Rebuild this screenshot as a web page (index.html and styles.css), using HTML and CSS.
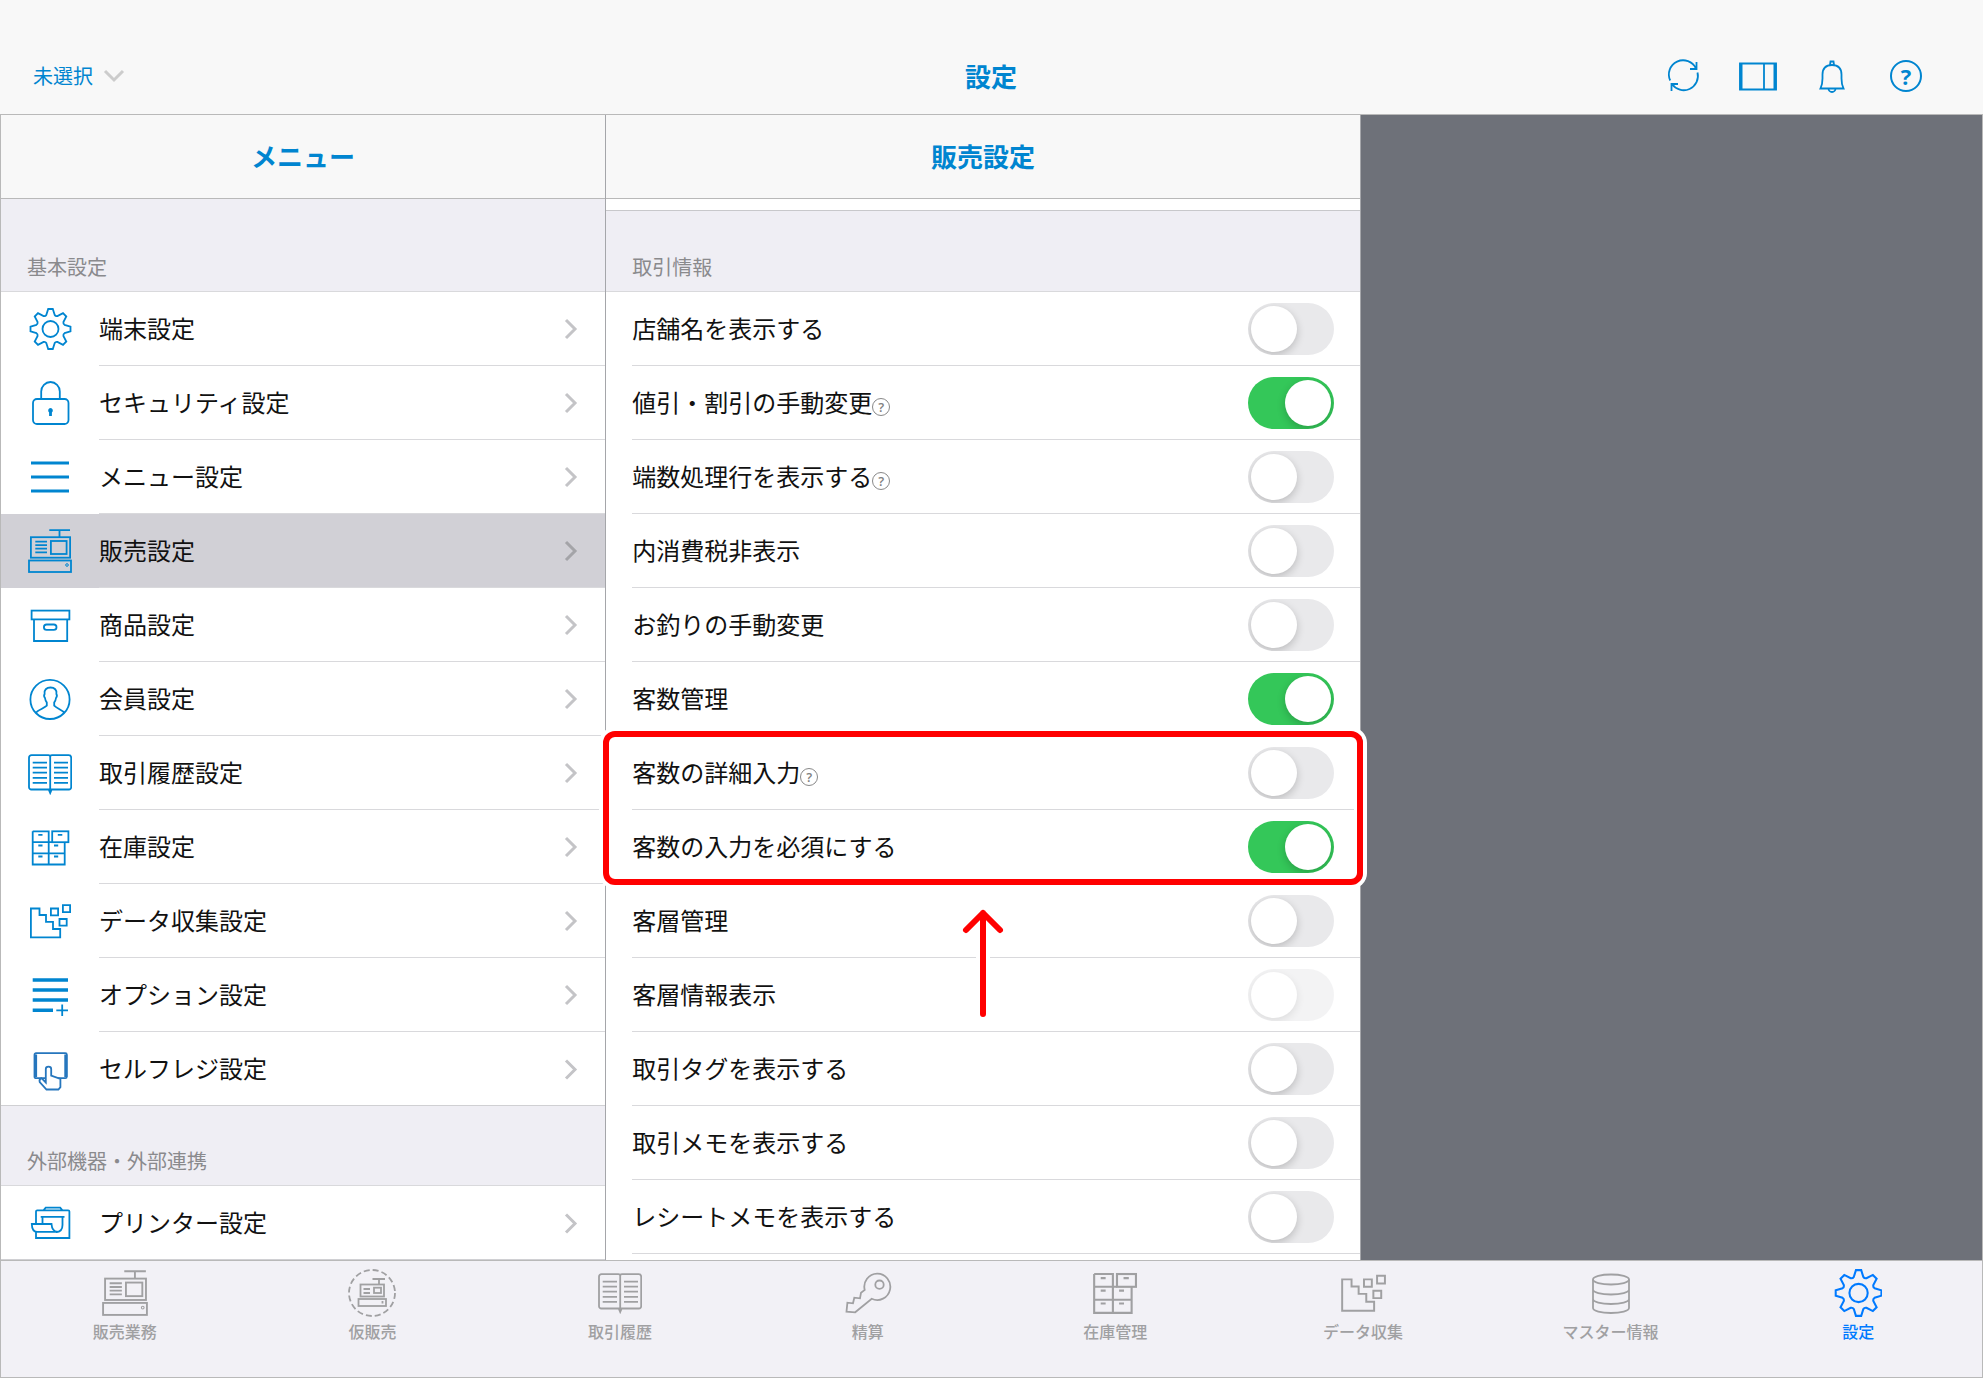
FILE: index.html
```html
<!DOCTYPE html>
<html lang="ja">
<head>
  <meta charset="utf-8">
  <title>設定</title>
  <meta name="viewport" content="width=device-width, initial-scale=1">
  <link rel="stylesheet" href="styles.css">
</head>

<body>

  <!-- icon sprite -->
  <svg class="sprite" aria-hidden="true">
    <symbol id="gear" viewBox="0 0 44 44">
      <g transform="translate(22.5 22)">
        <path d="M-4.2-14-2.3-20H2.3L4.2-14Q5-12.6 6.9-12.9L12.5-15.8 15.8-12.5 12.9-6.9Q12.6-5 14-4.2L20-2.3V2.3L14 4.2Q12.6 5 12.9 6.9L15.8 12.5 12.5 15.8 6.9 12.9Q5 12.6 4.2 14L2.3 20H-2.3L-4.2 14Q-5 12.6-6.9 12.9L-12.5 15.8-15.8 12.5-12.9 6.9Q-12.6 5-14 4.2L-20 2.3V-2.3L-14-4.2Q-12.6-5-12.9-6.9L-15.8-12.5-12.5-15.8-6.9-12.9Q-5-12.6-4.2-14z"/>
        <circle r="8"/>
      </g>
    </symbol>
    <symbol id="lock" viewBox="0 0 44 44">
      <rect x="5" y="18" width="35.5" height="25" rx="4"/>
      <path d="M13.2 18V10.5a9.3 9.5 0 0 1 18.6 0V18"/>
      <path class="solid" d="M22.5 27a2.6 2.6 0 0 1 1.4 4.6V35h-2.8v-3.4a2.6 2.6 0 0 1 1.4-4.6z"/>
    </symbol>
    <symbol id="lines" viewBox="0 0 44 44">
      <path stroke-width="3" d="M3 8h38M3 22h38M3 36h38"/>
    </symbol>
    <symbol id="register" viewBox="0 0 44 44">
      <path d="M21.3 1.2H42M31.5 1v7M7.3 12.7H19M7.3 16.2H19M7.3 19.7H19M7.3 23.3H19"/>
      <rect x="2.9" y="8.2" width="39.2" height="20.5"/>
      <rect x="22.9" y="12" width="15.7" height="13"/>
      <rect x="1" y="31.5" width="42" height="11.5"/>
      <circle cx="39" cy="36" r="1.3" stroke-width="1"/>
    </symbol>
    <symbol id="box" viewBox="0 0 44 44">
      <rect x="3.6" y="7.6" width="37.8" height="8.8"/>
      <path d="M6 16.4V38h33.2V16.4"/>
      <rect x="15.9" y="21.5" width="12.6" height="5.4" rx="2.7"/>
    </symbol>
    <symbol id="member" viewBox="0 0 44 44">
      <circle cx="22" cy="22.4" r="19.6"/>
      <path d="M7.8 36c1.6-3 8-4.4 11-7.3v-3.2c-1.2-1.2-1.6-3-1.8-4.5-1-1.3-1.2-2.8-.4-4-.8-4 2-6.5 5.900-6.5s6.700 2.500 5.900 6.500c.8 1.200.6 2.700-.4 4-.2 1.500-.6 3.300-1.800 4.500v3.200c3 2.900 8.400 4.300 10.300 7.300"/>
    </symbol>
    <symbol id="book" viewBox="0 0 44 44">
      <path d="M22.200 5.500C22.200 4.500 21.500 4.200 20.500 4.200H3.500a2.500 2.500 0 0 0-2.500 2.500v29.500a2.300 2.300 0 0 0 2.500 2.300h17.200l1.500 3.500 1.500-3.500h17.200a2.300 2.300 0 0 0 2.300-2.300V6.700a2.500 2.500 0 0 0-2.500-2.500h-16.800c-1 0-1.700.3-1.700 1.300zV41"/>
      <path d="M4.700 11.700H19M4.700 16.700H19M4.700 21.700H19M4.700 26.800H19M4.700 31.900H19M26 11.700H40M26 16.700H40M26 21.700H40M26 26.800H40M26 31.900H40"/>
    </symbol>
    <symbol id="cabinet" viewBox="0 0 44 44">
      <path d="M4.700 6.300H20.700V39.500M4.700 6.300V39.500H36.700V17.200M4.700 17.200H24M4.700 28.300H36.700"/>
      <rect x="24.200" y="6.300" width="16.200" height="10.900"/>
      <path d="M10.300 9.800h4.200M29.800 9.800h4.500M10.300 20.500h4.200M26 20.500h4.200M10.300 31.500h4.200M26 31.500h4.200"/>
    </symbol>
    <symbol id="data" viewBox="0 0 44 44">
      <path d="M2.900 9.500H11.500V16H18V22.800H25V30H32.200V38.300H2.900z"/>
      <path d="M22.900 9.500h7.200v6.800h-7.200zM34.900 6.200h7.200v7h-7.200zM31.500 20h7.200v6.700h-7.200z"/>
    </symbol>
    <symbol id="option" viewBox="0 0 44 44">
      <path stroke-width="3.600" d="M4.700 7H40M4.700 17H40M4.700 27H40M4.700 37.300H25"/>
      <path d="M28.300 37.300H40M34.200 31.500V43"/>
    </symbol>
    <symbol id="touch" viewBox="0 0 44 44">
      <rect x="6.500" y="6.200" width="32.300" height="25" rx="1.500"/>
      <path stroke-width="3" d="M7.600 7.500V30M37.800 7.500V30"/>
      <path fill="#fff" d="M17.800 35.500V22q0-2.400 2.700-2.400t2.700 2.400v6.500l9.200 3.300v8.400l-2 2.300H18.500l-6.800-7.500q-.8-2.800 1.800-3.800z"/>
    </symbol>
    <symbol id="printer" viewBox="0 0 44 44">
      <path d="M8 23V10.500q0-1.200 1.200-1.200h31q1.200 0 1.200 1.200V37H8v-6M15.500 9.300l2.200-2.700h14.500l2.200 2.700M12.700 15.800H36.500M14.500 16v7M34.500 16v8q0 7-6.500 7"/>
      <path d="M3.800 23H23.500q.5 7.500 6 7.800H9q-5 0-5.200-7.800z"/>
    </symbol>
    <symbol id="pending" viewBox="0 0 48 48">
      <circle cx="24" cy="24" r="23" stroke-dasharray="6 3.030"/>
      <path d="M24.500 10H37M31 10v6M15.500 20H22M15.500 24H22"/>
      <rect x="12.500" y="15.500" width="23.500" height="12"/>
      <rect x="26" y="18.700" width="7" height="5.300"/>
      <rect x="10.500" y="30" width="27.500" height="7"/>
      <path d="M34.500 32v2.500"/>
    </symbol>
    <symbol id="key" viewBox="0 0 48 48">
      <path d="M20.700 21A13 13.200 0 1 1 27.700 29.700L11.200 43.300 2.500 42.700 3.400 33.700 9 34.300 10.300 28.700 16 29.300 17 23.700z"/>
      <circle cx="35.500" cy="15.700" r="4.200"/>
    </symbol>
    <symbol id="database" viewBox="0 0 48 48">
      <ellipse cx="24" cy="10.500" rx="18" ry="5"/>
      <path d="M6 10.500V39c0 2.800 8 5 18 5s18-2.200 18-5V10.500M6 20.500c0 2.800 8 5 18 5s18-2.200 18-5M6 30c0 2.800 8 5 18 5s18-2.200 18-5"/>
    </symbol>
    <symbol id="chevron" viewBox="0 0 14 22">
      <path d="M2 2l9 9-9 9"/>
    </symbol>
  </svg>

  <header class="topbar">
    <div class="store">
      <select aria-label="店舗">
        <option>未選択</option>
      </select>
      <svg class="store-arrow" viewBox="0 0 22 14"><path d="M2 2l9 9 9-9"/></svg>
    </div>
    <h1>設定</h1>
    <div class="tools">
      <button type="button" aria-label="更新">
        <svg class="icon" viewBox="0 0 38 38"><path d="M5.200 23.500A14.200 14.200 0 0 1 31 11.500M32.500 15.500A14.200 14.200 0 0 1 7 27M31.500 5v7H25M6.500 34v-7H13"/></svg>
      </button>
      <button type="button" aria-label="画面分割">
        <svg class="icon" viewBox="0 0 38 38"><path d="M1 6.500H37V32.500H1zM25 6V33"/><path stroke-width="3" d="M2 6V33M36 6V33"/></svg>
      </button>
      <button type="button" aria-label="お知らせ">
        <svg class="icon" viewBox="0 0 38 38"><path d="M7.500 31.500q2-4 2-10v-4q0-9.500 9.500-9.500t9.500 9.500v4q0 6 2 10zM17 8l.5-3.500h3L21 8M15.500 31.500a3.500 3.500 0 0 0 7 0"/></svg>
      </button>
      <button type="button" aria-label="ヘルプ"><span class="help-mark">?</span></button>
    </div>
  </header>

  <main>
    <nav class="menu">
      <h2>メニュー</h2>
      <h3 class="first">基本設定</h3>
      <ul>
        <li><a href="#"><svg class="icon"><use href="#gear"/></svg><span>端末設定</span><svg class="next"><use href="#chevron"/></svg></a></li>
        <li><a href="#"><svg class="icon"><use href="#lock"/></svg><span>セキュリティ設定</span><svg class="next"><use href="#chevron"/></svg></a></li>
        <li><a href="#"><svg class="icon"><use href="#lines"/></svg><span>メニュー設定</span><svg class="next"><use href="#chevron"/></svg></a></li>
        <li><a href="#" class="selected"><svg class="icon"><use href="#register"/></svg><span>販売設定</span><svg class="next"><use href="#chevron"/></svg></a></li>
        <li><a href="#"><svg class="icon"><use href="#box"/></svg><span>商品設定</span><svg class="next"><use href="#chevron"/></svg></a></li>
        <li><a href="#"><svg class="icon"><use href="#member"/></svg><span>会員設定</span><svg class="next"><use href="#chevron"/></svg></a></li>
        <li><a href="#"><svg class="icon"><use href="#book"/></svg><span>取引履歴設定</span><svg class="next"><use href="#chevron"/></svg></a></li>
        <li><a href="#"><svg class="icon"><use href="#cabinet"/></svg><span>在庫設定</span><svg class="next"><use href="#chevron"/></svg></a></li>
        <li><a href="#"><svg class="icon"><use href="#data"/></svg><span>データ収集設定</span><svg class="next"><use href="#chevron"/></svg></a></li>
        <li><a href="#"><svg class="icon"><use href="#option"/></svg><span>オプション設定</span><svg class="next"><use href="#chevron"/></svg></a></li>
        <li><a href="#"><svg class="icon self"><use href="#touch"/></svg><span>セルフレジ設定</span><svg class="next"><use href="#chevron"/></svg></a></li>
      </ul>
      <h3>外部機器・外部連携</h3>
      <ul>
        <li><a href="#"><svg class="icon"><use href="#printer"/></svg><span>プリンター設定</span><svg class="next"><use href="#chevron"/></svg></a></li>
      </ul>
    </nav>

    <section class="settings">
      <h2>販売設定</h2>
      <div class="scrolled"></div>
      <h3>取引情報</h3>
      <div class="row"><label for="shop-name">店舗名を表示する</label><input type="checkbox" id="shop-name"></div>
      <div class="row"><label for="discount">値引・割引の手動変更</label><button type="button" class="hint">?</button><input type="checkbox" id="discount" checked></div>
      <div class="row"><label for="rounding">端数処理行を表示する</label><button type="button" class="hint">?</button><input type="checkbox" id="rounding"></div>
      <div class="row"><label for="tax">内消費税非表示</label><input type="checkbox" id="tax"></div>
      <div class="row"><label for="change">お釣りの手動変更</label><input type="checkbox" id="change"></div>
      <div class="row"><label for="guests">客数管理</label><input type="checkbox" id="guests" checked></div>
      <div class="marked">
        <div class="row"><label for="guest-detail">客数の詳細入力</label><button type="button" class="hint">?</button><input type="checkbox" id="guest-detail"></div>
        <div class="row"><label for="guest-required">客数の入力を必須にする</label><input type="checkbox" id="guest-required" checked></div>
        <svg class="arrow" viewBox="0 0 48 118">
          <path class="halo" d="M24 8v101M7 25L24 8l17 17"/>
          <path d="M24 8v101M7 25L24 8l17 17"/>
        </svg>
      </div>
      <div class="row"><label for="segment">客層管理</label><input type="checkbox" id="segment"></div>
      <div class="row"><label for="segment-info">客層情報表示</label><input type="checkbox" id="segment-info" disabled></div>
      <div class="row"><label for="tag">取引タグを表示する</label><input type="checkbox" id="tag"></div>
      <div class="row"><label for="memo">取引メモを表示する</label><input type="checkbox" id="memo"></div>
      <div class="row"><label for="receipt-memo">レシートメモを表示する</label><input type="checkbox" id="receipt-memo"></div>
    </section>

    <div class="empty"></div>
  </main>

  <nav class="tabs">
    <a href="#"><svg class="icon" viewBox="-1 -1 46 46"><use href="#register" width="44" height="44"/></svg>販売業務</a>
    <a href="#"><svg class="icon" viewBox="0 0 48 48"><use href="#pending" width="48" height="48"/></svg>仮販売</a>
    <a href="#"><svg class="icon" viewBox="-2 -1 48 48"><use href="#book" width="44" height="44"/></svg>取引履歴</a>
    <a href="#"><svg class="icon" viewBox="0 0 48 48"><use href="#key" width="48" height="48"/></svg>精算</a>
    <a href="#"><svg class="icon" viewBox="2 2 41 41"><use href="#cabinet" width="44" height="44"/></svg>在庫管理</a>
    <a href="#"><svg class="icon" viewBox="0 0 44 44"><use href="#data" width="44" height="44"/></svg>データ収集</a>
    <a href="#"><svg class="icon" viewBox="0 0 48 48"><use href="#database" width="48" height="48"/></svg>マスター情報</a>
    <a href="#" class="current"><svg class="icon" viewBox="1 1 42 42"><use href="#gear" width="44" height="44"/></svg>設定</a>
  </nav>

</body>

</html>
```

FILE: styles.css
```css
* {
  box-sizing: border-box;
}

body {
  display: flex;
  flex-direction: column;
  min-height: 100vh;
  margin: 0;
  color: #111;
  background: #fff;
  font-family: "Noto Sans CJK JP", sans-serif;
  font-size: 24px;
  line-height: 32px;
}

h1, h2, h3, ul {
  margin: 0;
  padding: 0;
}

h1, h2 {
  color: #0085d0;
  font-size: 26px;
  font-weight: bold;
}

ul {
  list-style: none;
}

a {
  color: inherit;
  text-decoration: none;
}

button {
  padding: 0;
  border: 0;
  background: none;
  color: inherit;
  font: inherit;
}

.sprite {
  position: absolute;
  width: 0;
  height: 0;
}

.icon {
  fill: none;
  stroke: currentColor;
  stroke-width: 1.8;
}

.solid {
  fill: currentColor;
  stroke: none;
}

/* top bar */

.topbar {
  display: grid;
  grid-template-columns: 1fr auto 1fr;
  align-items: center;
  height: 115px;
  padding: 38px 58px 0 33px;
  border-bottom: 1px solid #b9b9b9;
  background: #f8f8f8;
  color: #0085d0;
}

.topbar h1 {
  padding-left: 24px;
}

.store {
  display: flex;
  align-items: center;
  gap: 10px;
}

.store select {
  appearance: none;
  padding: 0;
  border: 0;
  background: none;
  color: inherit;
  font: inherit;
  font-size: 20px;
}

.store-arrow {
  width: 22px;
  height: 14px;
  fill: none;
  stroke: #ccc;
  stroke-width: 3;
}

.tools {
  display: flex;
  justify-content: flex-end;
  gap: 36px;
}

.tools button {
  display: flex;
  align-items: center;
  justify-content: center;
  width: 38px;
  height: 38px;
}

.help-mark {
  width: 32px;
  height: 32px;
  border: 2px solid;
  border-radius: 50%;
  font: bold 22px/28px "Open Sans", sans-serif;
}

/* columns */

main {
  display: grid;
  grid-template-columns: 30.55% 38.1% 1fr;
  flex: 1;
  overflow: hidden;
  border: solid #b9b9b9;
  border-width: 0 1px;
}

.menu {
  border-right: 1px solid #a5a6aa;
}

.settings {
  border-right: 1px solid #a5a6aa;
}

.empty {
  background: #6e7179;
}

h2 {
  height: 84px;
  border-bottom: 1px solid #b9b9b9;
  background: #f8f8f8;
  line-height: 81px;
  text-align: center;
}

h3 {
  padding: 44px 26px 12px;
  border-bottom: 1px solid #d9d9dc;
  background: #efeef4;
  color: #8a8a8d;
  font-size: 20px;
  font-weight: normal;
  line-height: 24px;
}

.menu h3 {
  padding-top: 43px;
}

.menu h3.first {
  padding-top: 56px;
}

.scrolled {
  height: 12px;
  border-bottom: 1px solid #c8c8cb;
}

/* left menu */

.menu a {
  display: grid;
  grid-template-columns: 98px 1fr 54px;
  align-items: center;
  height: 74px;
}

.menu .icon {
  width: 44px;
  height: 44px;
  margin-left: 27px;
  color: #0085d0;
}

.menu .self {
  color: #2676bd;
}

.menu span, .menu .next {
  height: 74px;
  border-bottom: 1px solid #d9d9dc;
  line-height: 71px;
}

.menu .next {
  width: 54px;
  padding: 26px 27px 25px 13px;
  fill: none;
  stroke: #c4c4c7;
  stroke-width: 3;
}

.menu .selected {
  background: #d1d0d6;
}

.menu .selected .next {
  stroke: #a4a4a8;
}

.menu li:last-child a {
  border-bottom: 1px solid #d0d0d3;
}

.menu li:last-child span, .menu li:last-child .next {
  border-bottom: 0;
}

/* setting rows */

.row {
  display: flex;
  align-items: center;
  height: 74px;
  margin-left: 26px;
  padding-right: 26px;
  border-bottom: 1px solid #d9d9dc;
}

.row label {
  padding-bottom: 2px;
}

.row input {
  appearance: none;
  width: 86px;
  height: 52px;
  margin: 0 0 0 auto;
  padding: 3px;
  border-radius: 26px;
  background: #e9e9eb;
  overflow: hidden;
}

.row input::before {
  content: "";
  display: block;
  width: 46px;
  height: 46px;
  border-radius: 50%;
  background: #fff;
  box-shadow: 0 3px 8px rgba(0, 0, 0, .2);
}

.row input:checked {
  background: #34c759;
}

.row input:checked::before {
  margin-left: 34px;
}

.row input:disabled {
  opacity: .5;
}

.hint {
  width: 18px;
  height: 18px;
  margin-top: 8px;
  border: 1px solid #888;
  border-radius: 50%;
  color: #808080;
  font: 600 13px/16px "Open Sans", sans-serif;
}

/* red frame and arrow over the two guest rows */

.marked {
  position: relative;
}

.marked::after {
  content: "";
  position: absolute;
  inset: -5px -3px -1px;
  border: 6px solid #f00;
  border-radius: 12px;
  box-shadow: 0 0 0 4px #fff, inset 0 0 0 3px #fff;
  pointer-events: none;
}

.arrow {
  position: absolute;
  top: calc(100% + 21px);
  left: 50%;
  width: 48px;
  height: 118px;
  margin-left: -24px;
  fill: none;
  stroke: #f00;
  stroke-width: 6;
  stroke-linecap: round;
  stroke-linejoin: round;
  pointer-events: none;
}

.arrow .halo {
  stroke: #fff;
  stroke-width: 14;
}

/* bottom tabs */

.tabs {
  display: grid;
  grid-template-columns: repeat(8, 1fr);
  height: 118px;
  border: 1px solid #b9b9b9;
  background: #f2f1f6;
  color: #a0a0a2;
  font-size: 16px;
  font-weight: 500;
  line-height: 20px;
}

.tabs a {
  display: flex;
  flex-direction: column;
  align-items: center;
  gap: 4px;
  padding-top: 8px;
}

.tabs .icon {
  width: 48px;
  height: 48px;
}

.tabs .current {
  color: #007aff;
}
```
